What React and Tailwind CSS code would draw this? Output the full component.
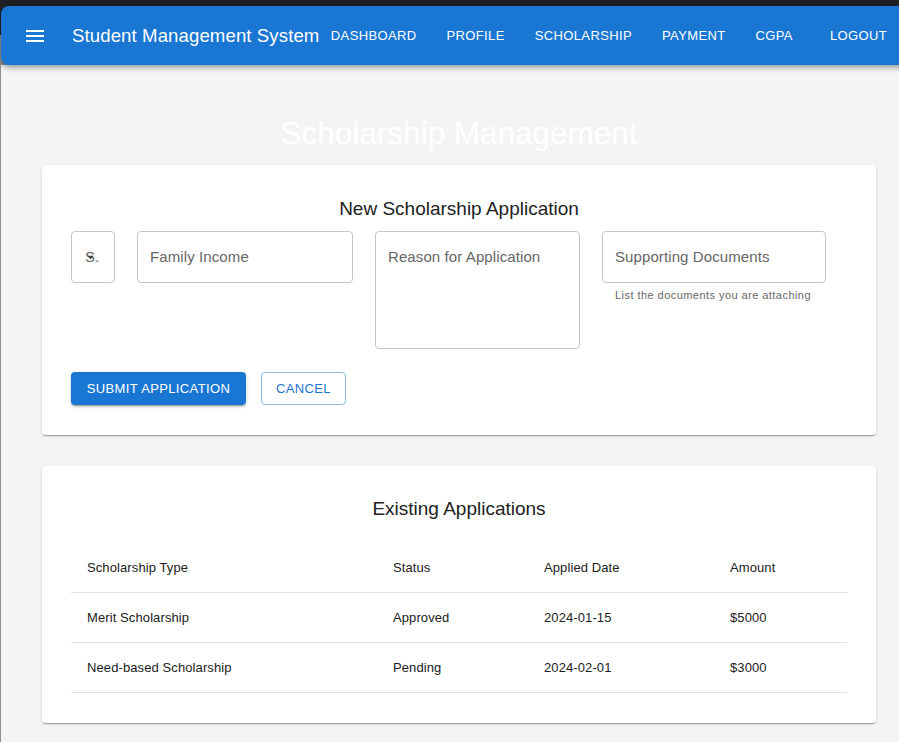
import React from "react";

const navItems = ["DASHBOARD", "PROFILE", "SCHOLARSHIP", "PAYMENT", "CGPA", "LOGOUT"];

const rows = [
  ["Merit Scholarship", "Approved", "2024-01-15", "$5000"],
  ["Need-based Scholarship", "Pending", "2024-02-01", "$3000"],
];

const colW = ["w-[306px]", "w-[151px]", "w-[186px]", "w-[133px]"];

function Row({ cells }) {
  return (
    <div className="flex h-[50px] items-center border-b border-[#e0e0e0]">
      {cells.map((c, i) => (
        <div key={i} className={`${colW[i]} pl-4 text-[13px] tracking-[0.1px] text-[#212121]`}>
          {c}
        </div>
      ))}
    </div>
  );
}

export default function App() {
  return (
    <div className="w-[899px] h-[742px] overflow-hidden bg-[#f4f4f4] font-['Liberation_Sans',Arial,sans-serif]">
      <div className="w-[919px]">
        <div className="h-[6px] bg-[#202124]" />
        <div className="pl-px bg-[linear-gradient(#202124_50%,#8f8f8f_50%)]">
          <header className="relative z-10 flex h-[59px] items-center rounded-l-[8px] bg-[#1976d2] pl-[22px] pr-[24px] text-white shadow-[0_2px_4px_-1px_rgba(0,0,0,0.2),0_4px_5px_0_rgba(0,0,0,0.14),0_1px_10px_0_rgba(0,0,0,0.12)]">
            <svg viewBox="0 0 24 24" className="h-6 w-6 fill-white">
              <path d="M3 18h18v-2H3zm0-5h18v-2H3zm0-7v2h18V6z" />
            </svg>
            <div className="ml-[25px] whitespace-nowrap text-[18.6px] leading-[30px] tracking-[0.1px]">
              Student Management System
            </div>
            <nav className="ml-auto flex items-center gap-[14px]">
              {navItems.map((n) => (
                <div
                  key={n}
                  className={`flex h-[33px] items-center justify-center px-2 text-[13px] tracking-[0.37px] ${n === "LOGOUT" ? "ml-[7px]" : ""}`}
                >
                  {n}
                </div>
              ))}
            </nav>
          </header>
        </div>
        <main className="h-[677px] border-l border-[#8f8f8f] pl-[41px] pr-[43px]">
          <h1 className="pt-[49px] pb-[13px] text-center text-[31.5px] leading-[38px] text-white">
            Scholarship Management
          </h1>

          <section className="rounded-[4px] bg-white px-[29px] pt-[32px] pb-[30px] shadow-[0_2px_1px_-1px_rgba(0,0,0,0.2),0_1px_1px_0_rgba(0,0,0,0.14),0_1px_3px_0_rgba(0,0,0,0.12)]">
            <h2 className="mb-[10px] text-center text-[19px] leading-[24px] text-[#212121]">
              New Scholarship Application
            </h2>
            <div className="flex items-start gap-[22px]">
              <div className="relative flex h-[52px] w-[44px] items-center overflow-hidden rounded-[4px] border border-[#c4c4c4] pl-[13px] text-[15px] text-[#666]">
                <span>S.</span>
                <svg viewBox="0 0 10 5" className="absolute left-[15px] top-[23px] h-[5px] w-[7px] fill-[#444]">
                  <path d="M0 0l5 5 5-5z" />
                </svg>
              </div>
              <div className="flex h-[52px] w-[216px] items-center rounded-[4px] border border-[#c4c4c4] px-[12px] text-[15px] tracking-[0.1px] text-[#666]">
                Family Income
              </div>
              <div className="h-[118px] w-[205px] rounded-[4px] border border-[#c4c4c4] px-[12px] pt-[16px] text-[15px] leading-[18px] tracking-[0.1px] text-[#666]">
                Reason for Application
              </div>
              <div className="flex flex-col">
                <div className="flex h-[52px] w-[224px] items-center rounded-[4px] border border-[#c4c4c4] px-[12px] text-[15px] tracking-[0.1px] text-[#666]">
                  Supporting Documents
                </div>
                <div className="mt-[2px] px-[13px] text-[11px] leading-[20px] tracking-[0.45px] text-[#666]">
                  List the documents you are attaching
                </div>
              </div>
            </div>
            <div className="mt-[23px] flex gap-[15px]">
              <div className="flex h-[33px] w-[175px] items-center justify-center rounded-[4px] bg-[#1976d2] text-[13px] tracking-[0.37px] text-white shadow-[0_3px_1px_-2px_rgba(0,0,0,0.2),0_2px_2px_0_rgba(0,0,0,0.14),0_1px_5px_0_rgba(0,0,0,0.12)]">
                SUBMIT APPLICATION
              </div>
              <div className="flex h-[33px] w-[85px] items-center justify-center rounded-[4px] border border-[#8cb9e8] text-[13px] tracking-[0.37px] text-[#1976d2]">
                CANCEL
              </div>
            </div>
          </section>

          <section className="mt-[31px] rounded-[4px] bg-white px-[29px] pt-[31px] pb-[30px] shadow-[0_2px_1px_-1px_rgba(0,0,0,0.2),0_1px_1px_0_rgba(0,0,0,0.14),0_1px_3px_0_rgba(0,0,0,0.12)]">
            <h2 className="mb-[22px] text-center text-[19px] leading-[24px] text-[#212121]">
              Existing Applications
            </h2>
            <div className="w-[776px]">
              <Row cells={["Scholarship Type", "Status", "Applied Date", "Amount"]} />
              {rows.map((r) => (
                <Row key={r[0]} cells={r} />
              ))}
            </div>
          </section>
        </main>
      </div>
    </div>
  );
}
